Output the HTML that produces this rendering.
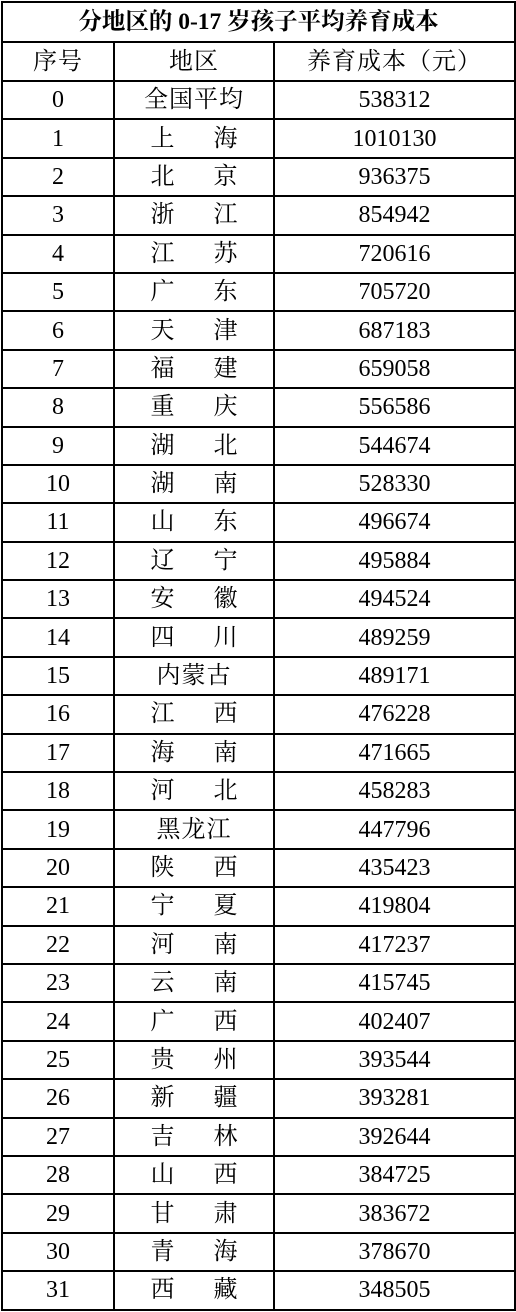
<!DOCTYPE html>
<html><head><meta charset="utf-8"><style>
html,body{margin:0;padding:0;background:#fff;width:516px;height:1312px;overflow:hidden}
table{position:absolute;left:1px;top:1px;border-collapse:collapse;width:513px;table-layout:fixed;font-family:"Liberation Serif","Noto Serif CJK SC",serif;font-size:24px;color:#000}
td{border:2px solid #000;text-align:center;padding:0;height:36.4px;line-height:24px}
tr.t td{height:38px;font-weight:bold;font-size:23.5px}
tr.h td{height:37px}
.s{display:inline-flex;gap:39px}
.w{letter-spacing:1px}
</style></head><body>
<table>
<colgroup><col style="width:112px"><col style="width:160px"><col style="width:241px"></colgroup>
<tr class="t"><td colspan="3">分地区的 0-17 岁孩子平均养育成本</td></tr>
<tr class="h"><td class="w">序号</td><td class="w">地区</td><td class="w">养育成本（元）</td></tr>
<tr><td>0</td><td class="w">全国平均</td><td>538312</td></tr>
<tr><td>1</td><td><span class="s"><span>上</span><span>海</span></span></td><td>1010130</td></tr>
<tr><td>2</td><td><span class="s"><span>北</span><span>京</span></span></td><td>936375</td></tr>
<tr><td>3</td><td><span class="s"><span>浙</span><span>江</span></span></td><td>854942</td></tr>
<tr><td>4</td><td><span class="s"><span>江</span><span>苏</span></span></td><td>720616</td></tr>
<tr><td>5</td><td><span class="s"><span>广</span><span>东</span></span></td><td>705720</td></tr>
<tr><td>6</td><td><span class="s"><span>天</span><span>津</span></span></td><td>687183</td></tr>
<tr><td>7</td><td><span class="s"><span>福</span><span>建</span></span></td><td>659058</td></tr>
<tr><td>8</td><td><span class="s"><span>重</span><span>庆</span></span></td><td>556586</td></tr>
<tr><td>9</td><td><span class="s"><span>湖</span><span>北</span></span></td><td>544674</td></tr>
<tr><td>10</td><td><span class="s"><span>湖</span><span>南</span></span></td><td>528330</td></tr>
<tr><td>11</td><td><span class="s"><span>山</span><span>东</span></span></td><td>496674</td></tr>
<tr><td>12</td><td><span class="s"><span>辽</span><span>宁</span></span></td><td>495884</td></tr>
<tr><td>13</td><td><span class="s"><span>安</span><span>徽</span></span></td><td>494524</td></tr>
<tr><td>14</td><td><span class="s"><span>四</span><span>川</span></span></td><td>489259</td></tr>
<tr><td>15</td><td class="w">内蒙古</td><td>489171</td></tr>
<tr><td>16</td><td><span class="s"><span>江</span><span>西</span></span></td><td>476228</td></tr>
<tr><td>17</td><td><span class="s"><span>海</span><span>南</span></span></td><td>471665</td></tr>
<tr><td>18</td><td><span class="s"><span>河</span><span>北</span></span></td><td>458283</td></tr>
<tr><td>19</td><td class="w">黑龙江</td><td>447796</td></tr>
<tr><td>20</td><td><span class="s"><span>陕</span><span>西</span></span></td><td>435423</td></tr>
<tr><td>21</td><td><span class="s"><span>宁</span><span>夏</span></span></td><td>419804</td></tr>
<tr><td>22</td><td><span class="s"><span>河</span><span>南</span></span></td><td>417237</td></tr>
<tr><td>23</td><td><span class="s"><span>云</span><span>南</span></span></td><td>415745</td></tr>
<tr><td>24</td><td><span class="s"><span>广</span><span>西</span></span></td><td>402407</td></tr>
<tr><td>25</td><td><span class="s"><span>贵</span><span>州</span></span></td><td>393544</td></tr>
<tr><td>26</td><td><span class="s"><span>新</span><span>疆</span></span></td><td>393281</td></tr>
<tr><td>27</td><td><span class="s"><span>吉</span><span>林</span></span></td><td>392644</td></tr>
<tr><td>28</td><td><span class="s"><span>山</span><span>西</span></span></td><td>384725</td></tr>
<tr><td>29</td><td><span class="s"><span>甘</span><span>肃</span></span></td><td>383672</td></tr>
<tr><td>30</td><td><span class="s"><span>青</span><span>海</span></span></td><td>378670</td></tr>
<tr><td>31</td><td><span class="s"><span>西</span><span>藏</span></span></td><td>348505</td></tr>
</table>
</body></html>
